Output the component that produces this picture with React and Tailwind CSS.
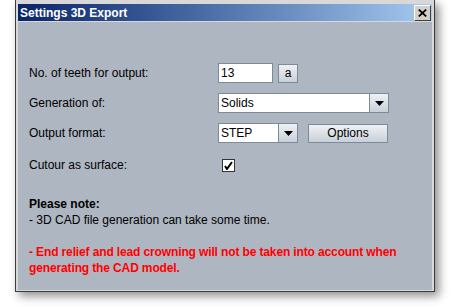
import React from "react";

const font = { fontFamily: '"Liberation Sans", Arial, sans-serif' };

function Arrow() {
  return (
    <svg width="9" height="5" viewBox="0 0 9 5">
      <polygon points="0,0 9,0 4.5,5" fill="#000" />
    </svg>
  );
}

function Combo({ value, width }) {
  return (
    <div className={`flex h-[20px] ${width} border border-[#7d8a97] bg-white`}>
      <div className="flex flex-1 items-center pl-[2px] text-[12px] text-black">{value}</div>
      <div className="flex w-[19px] items-center justify-center border-l border-[#7d8a97] bg-gradient-to-b from-[#eef1f4] to-[#c9d0d8]">
        <Arrow />
      </div>
    </div>
  );
}

function Btn({ children, className }) {
  return (
    <div
      className={`flex h-[19px] items-center justify-center border border-[#7d8a97] bg-gradient-to-b from-[#eef1f4] to-[#c9d0d8] text-[12px] text-black ${className}`}
    >
      {children}
    </div>
  );
}

export default function App() {
  return (
    <div className="h-[307px] w-[451px] bg-white pl-[15px]" style={font}>
      <div className="flex h-[292px] w-[420px] flex-col border-x border-b border-[#3c3c3c] bg-[#d8d8d8] px-[2px] pb-[1px] pt-[4px] shadow-[4px_4px_9px_rgba(0,0,0,0.45)]">
        <div className="flex h-[17px] items-center justify-between bg-gradient-to-r from-[#0a246a] to-[#a6caf0] pl-[2px] pr-[1px]">
          <span className="text-[12px] font-bold leading-none text-white">Settings 3D Export</span>
          <div className="flex h-[16px] w-[17px] items-center justify-center border border-t-white border-l-white border-r-[#404040] border-b-[#404040] bg-[#d4d0c8]">
            <svg width="9" height="8" viewBox="0 0 9 8">
              <path d="M0.8 0.6 L8.2 7.4 M8.2 0.6 L0.8 7.4" stroke="#000" strokeWidth="1.8" />
            </svg>
          </div>
        </div>
        <div className="mt-[1px] flex-1 bg-[#aeb6c1] pl-[11px] pt-[41px] text-[12px] text-black">
          <div className="grid grid-cols-[189px_1fr] gap-y-[10px]">
            <div className="flex h-[20px] items-center">No. of teeth for output:</div>
            <div className="flex h-[20px] items-center gap-[5px]">
              <div className="flex h-[20px] w-[55px] items-center border border-[#7d8a97] bg-white pl-[2px]">13</div>
              <Btn className="w-[20px]">a</Btn>
            </div>
            <div className="flex h-[20px] items-center">Generation of:</div>
            <div className="flex h-[20px] items-center">
              <Combo value="Solids" width="w-[171px]" />
            </div>
            <div className="flex h-[20px] items-center">Output format:</div>
            <div className="flex h-[20px] items-center gap-[10px]">
              <Combo value="STEP" width="w-[80px]" />
              <Btn className="w-[80px]">Options</Btn>
            </div>
            <div className="mt-[2px] flex h-[20px] items-center">Cutour as surface:</div>
            <div className="mt-[2px] flex h-[20px] items-center pl-[4px]">
              <div className="flex h-[13px] w-[13px] items-center justify-center border border-[#333] bg-white">
                <svg width="9" height="9" viewBox="0 0 9 9">
                  <path d="M1 5 L3 8 L8 1" stroke="#000" strokeWidth="2" fill="none" />
                </svg>
              </div>
            </div>
          </div>
          <div className="mt-[21px] leading-[16px]">
            <div className="font-bold">Please note:</div>
            <div>- 3D CAD file generation can take some time.</div>
            <div className="h-[16px]" />
            <div className="font-bold tracking-[-0.13px] text-[#ff0000]">
              - End relief and lead crowning will not be taken into account when
              <br />
              generating the CAD model.
            </div>
          </div>
        </div>
      </div>
    </div>
  );
}
